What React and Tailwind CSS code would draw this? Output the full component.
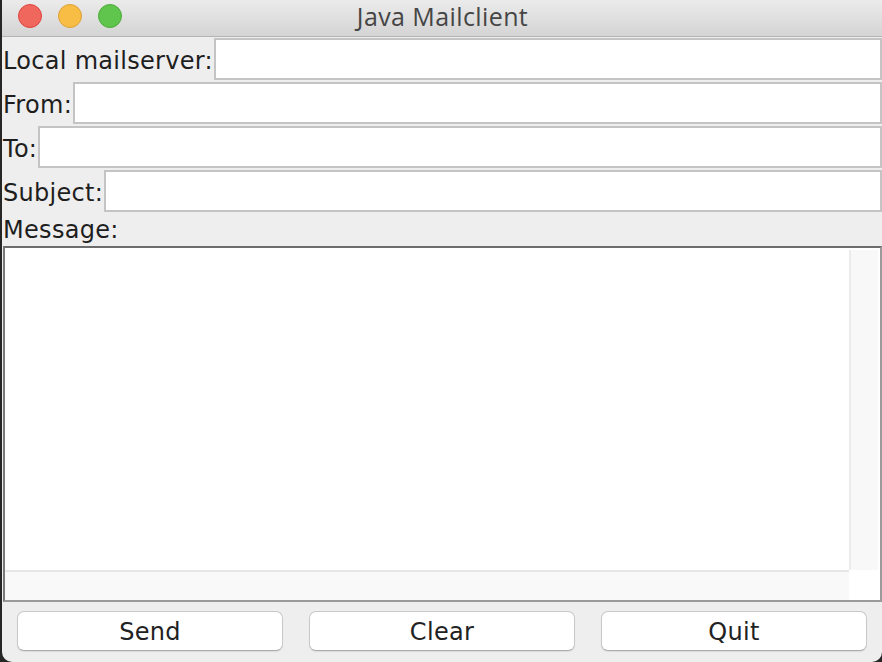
import React from "react";

const labelFont = { fontFamily: '"DejaVu Sans", "Noto Sans", sans-serif' };

function Row({ label }) {
  return (
    <div className="flex h-[42px] items-center">
      <span className="mt-[3px] text-[24px] leading-none text-[#1e1e1e] tracking-[0.3px]">{label}</span>
      <div className="ml-[1px] h-[42px] flex-1 border-2 border-[#c4c4c4] bg-white" />
    </div>
  );
}

export default function App() {
  return (
    <div className="w-[882px] h-[662px] bg-[#262626] overflow-hidden">
      <div className="ml-[2px] flex h-[662px] w-[880px] flex-col overflow-hidden rounded-b-[10px] bg-[#eeeeee]" style={labelFont}>
        <div className="relative flex h-[37px] shrink-0 items-center justify-center border-b border-[#b4b4b4] bg-gradient-to-b from-[#ebebeb] to-[#d4d4d4]">
          <div className="absolute left-[16px] top-[4px] flex gap-[16px]">
            <div className="h-[24px] w-[24px] rounded-full border border-[#e0443e] bg-[#f0675e]" />
            <div className="h-[24px] w-[24px] rounded-full border border-[#dea236] bg-[#f7bd45]" />
            <div className="h-[24px] w-[24px] rounded-full border border-[#4fab3c] bg-[#5fc54d]" />
          </div>
          <span className="ml-[1px] mt-[-4px] text-[25px] leading-none tracking-[0.4px] text-[#454545]" style={{ fontFamily: '"Open Sans", "Liberation Sans", sans-serif' }}>Java Mailclient</span>
        </div>
        <div className="flex flex-col gap-[2px] pl-[1px] pt-[1px]">
          <Row label="Local mailserver:" />
          <Row label="From:" />
          <Row label="To:" />
          <Row label="Subject:" />
        </div>
        <div className="flex h-[34px] items-center pl-[1px]">
          <span className="mt-[2px] text-[24px] leading-none text-[#1e1e1e] tracking-[0.3px]">Message:</span>
        </div>
        <div className="ml-[1px] flex h-[356px] flex-col border-t-2 border-l-2 border-r-2 border-b-2 border-t-[#6c6c6c] border-l-[#7a7a7a] border-r-[#9a9a9a] border-b-[#9a9a9a] bg-white">
          <div className="flex flex-1">
            <div className="flex-1 bg-white" />
            <div className="mt-[2px] mr-[2px] w-[29px] border-l-2 border-[#ebebeb] bg-[#f8f8f8]" />
          </div>
          <div className="flex h-[30px]">
            <div className="flex-1 border-t-2 border-[#e6e6e6] bg-[#f9f9f9]" />
            <div className="w-[31px] bg-white" />
          </div>
        </div>
        <div className="flex flex-1 items-start gap-[26px] pl-[15px] pt-[9px]">
          {["Send", "Clear", "Quit"].map((t) => (
            <button
              key={t}
              className="flex h-[40px] w-[266px] items-center justify-center rounded-[7px] border border-[#c8c8c8] border-b-[#ababab] bg-white pt-[1px] text-[24px] leading-none tracking-[0.3px] text-[#222] shadow-[0_1px_1px_rgba(0,0,0,0.08)]"
              style={labelFont}
            >
              {t}
            </button>
          ))}
        </div>
      </div>
    </div>
  );
}
